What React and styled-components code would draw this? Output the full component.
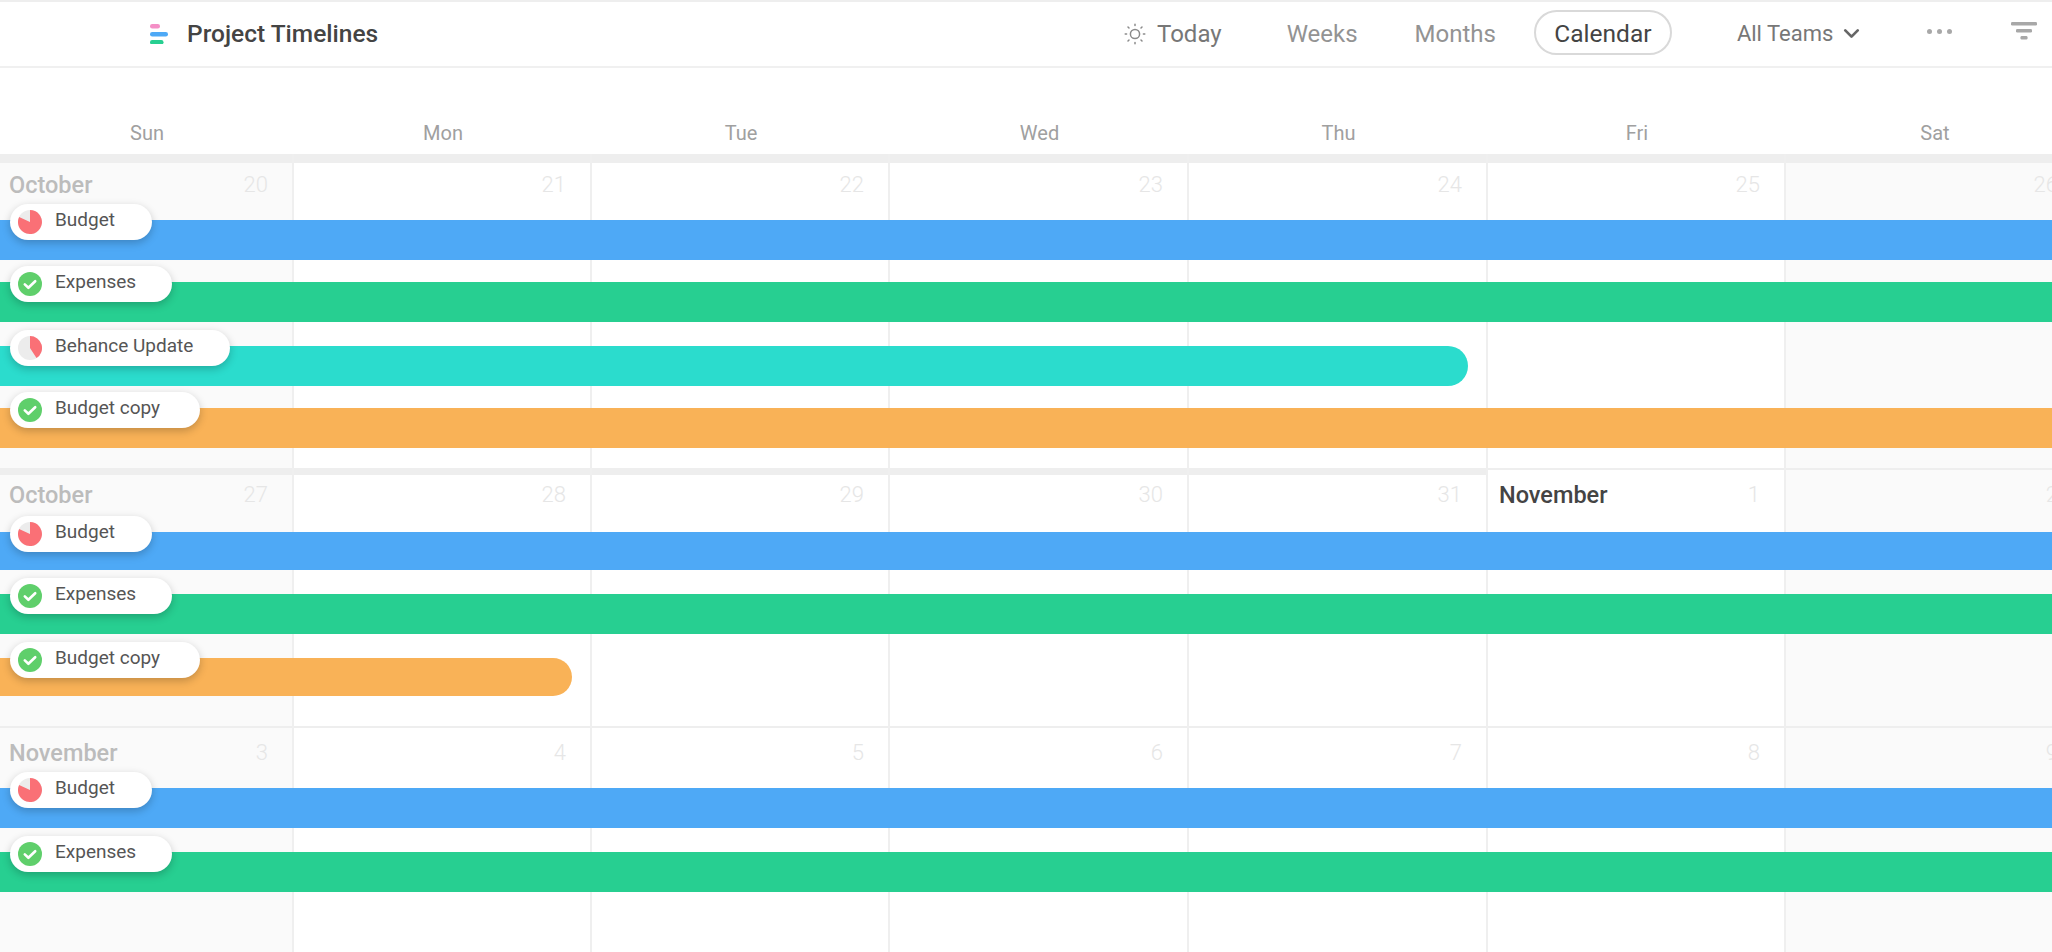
import React from 'react';
import styled, { createGlobalStyle } from 'styled-components';
import { ChevronDown } from 'lucide-react';

const DAYS = ['Sun', 'Mon', 'Tue', 'Wed', 'Thu', 'Fri', 'Sat'];
const COLUMNS = '294px 298px 298px 299px 299px 298px 298px';

const WEEKS = [
  {
    height: 314,
    pad: 19,
    barsTop: 66,
    cells: [
      { date: 20, month: 'October', band: 9 },
      { date: 21, band: 9 },
      { date: 22, band: 9 },
      { date: 23, band: 9 },
      { date: 24, band: 9 },
      { date: 25, band: 9 },
      { date: 26, band: 9 },
    ],
    bars: [
      { name: 'Budget', color: '#4ea9f6', status: 'most', gap: 0, h: 40, pill: 142 },
      { name: 'Expenses', color: '#27cf91', status: 'done', gap: 22, h: 40, pill: 162 },
      { name: 'Behance Update', color: '#2bdccd', status: 'some', gap: 24, h: 40, pill: 220, end: 1468 },
      { name: 'Budget copy', color: '#f9b257', status: 'done', gap: 22, h: 40, pill: 190 },
    ],
  },
  {
    height: 258,
    pad: 15,
    barsTop: 64,
    cells: [
      { date: 27, month: 'October', band: 7 },
      { date: 28, band: 7 },
      { date: 29, band: 7 },
      { date: 30, band: 7 },
      { date: 31, band: 7 },
      { date: 1, month: 'November', band: 2, current: true },
      { date: 2, band: 2 },
    ],
    bars: [
      { name: 'Budget', color: '#4ea9f6', status: 'most', gap: 0, h: 38, pill: 142 },
      { name: 'Expenses', color: '#27cf91', status: 'done', gap: 24, h: 40, pill: 162 },
      { name: 'Budget copy', color: '#f9b257', status: 'done', gap: 24, h: 38, pill: 190, end: 572 },
    ],
  },
  {
    height: 226,
    pad: 15,
    barsTop: 62,
    cells: [
      { date: 3, month: 'November', band: 2 },
      { date: 4, band: 2 },
      { date: 5, band: 2 },
      { date: 6, band: 2 },
      { date: 7, band: 2 },
      { date: 8, band: 2 },
      { date: 9, band: 2 },
    ],
    bars: [
      { name: 'Budget', color: '#4ea9f6', status: 'most', gap: 0, h: 40, pill: 142 },
      { name: 'Expenses', color: '#27cf91', status: 'done', gap: 24, h: 40, pill: 162 },
    ],
  },
];

function LogoIcon() {
  return (
    <svg width="18" height="20" viewBox="0 0 18 20">
      <rect x="0" y="0" width="10" height="4.5" rx="2.2" fill="#f48fc6" />
      <rect x="0" y="8" width="18" height="4.5" rx="2.2" fill="#4ea9f6" />
      <rect x="0" y="16" width="13.5" height="4.5" rx="2.2" fill="#27cf91" />
    </svg>
  );
}

function SunIcon() {
  return (
    <svg width="22" height="22" viewBox="0 0 22 22" fill="none" stroke="#8a8a8a" strokeWidth="1.5" strokeLinecap="round">
      <circle cx="11" cy="11" r="4.6" />
      <path d="M11 1.2v1.4M11 19.4v1.4M1.2 11h1.4M19.4 11h1.4M4 4l1 1M17 17l1 1M4 18l1-1M17 5l1-1" />
    </svg>
  );
}

function FilterIcon() {
  return (
    <svg width="26" height="18" viewBox="0 0 26 18">
      <rect x="0" y="0" width="26" height="3.4" rx="1.2" fill="#a8a8a8" />
      <rect x="5" y="7" width="16" height="3.4" rx="1.2" fill="#a8a8a8" />
      <rect x="9.5" y="14" width="7" height="3.4" rx="1.2" fill="#a8a8a8" />
    </svg>
  );
}

function StatusIcon({ status }) {
  if (status === 'done') {
    return (
      <svg width="24" height="24" viewBox="0 0 24 24">
        <circle cx="12" cy="12" r="12" fill="#5fcf6b" />
        <path d="M6.8 12.4l3.6 3.4 6.8-6.6" fill="none" stroke="#fff" strokeWidth="2.6" strokeLinecap="round" strokeLinejoin="round" />
      </svg>
    );
  }
  const slice =
    status === 'most'
      ? 'M12 12L12 0A12 12 0 1 1 1.1 6.9Z'
      : 'M12 12L12 0A12 12 0 0 1 18.5 22.1Z';
  return (
    <svg width="24" height="24" viewBox="0 0 24 24">
      <circle cx="12" cy="12" r="12" fill="#ececec" />
      <path d={slice} fill="#fa7076" />
    </svg>
  );
}

export default function App() {
  return (
    <Page>
      <GlobalStyle />
      <Header>
        <Brand>
          <LogoIcon />
          <Title>Project Timelines</Title>
        </Brand>
        <TodayLink>
          <SunIcon />
          Today
        </TodayLink>
        <NavLink $left={65}>Weeks</NavLink>
        <NavLink $left={57}>Months</NavLink>
        <CalendarPill>Calendar</CalendarPill>
        <TeamSelect>
          All Teams
          <ChevronDown size={25} strokeWidth={2.6} color="#666" />
        </TeamSelect>
        <MoreDots>
          <i />
          <i />
          <i />
        </MoreDots>
        <FilterButton>
          <FilterIcon />
        </FilterButton>
      </Header>

      <DayRow>
        {DAYS.map(day => (
          <DayName key={day}>{day}</DayName>
        ))}
      </DayRow>

      {WEEKS.map(week => (
        <Week key={week.cells[0].date} $height={week.height}>
          <Cells>
            {week.cells.map((cell, i) => (
              <Cell key={cell.date} $pad={week.pad} $band={cell.band} $weekend={i === 0 || i === 6}>
                <Month $current={cell.current}>{cell.month}</Month>
                <DateNum>{cell.date}</DateNum>
              </Cell>
            ))}
          </Cells>
          <Bars $top={week.barsTop}>
            {week.bars.map(bar => (
              <Bar key={bar.name} $color={bar.color} $gap={bar.gap} $h={bar.h} $end={bar.end}>
                <Pill $width={bar.pill}>
                  <StatusIcon status={bar.status} />
                  <PillName>{bar.name}</PillName>
                </Pill>
              </Bar>
            ))}
          </Bars>
        </Week>
      ))}
    </Page>
  );
}

const GlobalStyle = createGlobalStyle`
  html, body {
    margin: 0;
    background: #fff;
    overflow: hidden;
  }
  * {
    box-sizing: border-box;
  }
`;

const Page = styled.div`
  width: 2052px;
  height: 952px;
  overflow: hidden;
  font-family: Roboto, 'Liberation Sans', sans-serif;
  color: #444;
`;

const Header = styled.header`
  display: flex;
  align-items: center;
  height: 68px;
  padding-left: 150px;
  border-top: 2px solid #eeeeee;
  border-bottom: 2px solid #f0f0f0;
`;

const Brand = styled.div`
  display: flex;
  align-items: center;
  gap: 19px;
  width: 974px;
`;

const Title = styled.h1`
  margin: 0 0 2px;
  font-size: 24.5px;
  font-weight: 500;
  color: #444;
`;

const TodayLink = styled.div`
  display: flex;
  align-items: center;
  gap: 11px;
  font-size: 24px;
  color: #777;
`;

const NavLink = styled.div`
  margin-left: ${props => props.$left}px;
  font-size: 24px;
  color: #939393;
`;

const CalendarPill = styled.div`
  display: flex;
  align-items: center;
  justify-content: center;
  align-self: flex-start;
  width: 138px;
  height: 45px;
  margin: 8px 0 0 38px;
  padding-top: 2px;
  border: 2px solid #d9d9d9;
  border-radius: 23px;
  font-size: 24.5px;
  color: #444;
`;

const TeamSelect = styled.div`
  display: flex;
  align-items: center;
  gap: 6px;
  margin: 0 0 2px 65px;
  font-size: 22px;
  color: #777;
`;

const MoreDots = styled.div`
  display: flex;
  gap: 5px;
  margin: 0 0 6px 63px;

  i {
    width: 5px;
    height: 5px;
    border-radius: 50%;
    background: #a8a8a8;
  }
`;

const FilterButton = styled.div`
  display: flex;
  margin: 0 0 6px 59px;
`;

const DayRow = styled.div`
  display: grid;
  grid-template-columns: ${COLUMNS};
  height: 86px;
`;

const DayName = styled.div`
  padding-top: 53px;
  line-height: 24px;
  text-align: center;
  font-size: 20px;
  color: #a0a0a0;
`;

const Week = styled.section`
  display: grid;
  height: ${props => props.$height}px;
`;

const Cells = styled.div`
  grid-area: 1 / 1;
  display: grid;
  grid-template-columns: ${COLUMNS};
`;

const Cell = styled.div`
  display: flex;
  justify-content: space-between;
  align-items: flex-start;
  padding: ${props => props.$pad}px 24px 0 ${props => (props.$weekend ? 9 : 11)}px;
  border-right: 2px solid #efefef;
  box-shadow: inset 0 ${props => props.$band}px 0 #eeeeee;
  background: ${props => (props.$weekend ? '#fafafa' : '#fff')};
`;

const Month = styled.span`
  line-height: 24px;
  font-size: 23.5px;
  font-weight: 500;
  color: ${props => (props.$current ? '#444' : '#bcbcbc')};
`;

const DateNum = styled.span`
  line-height: 24px;
  font-size: 22px;
  font-weight: 300;
  color: #e6e6e6;
`;

const Bars = styled.div`
  grid-area: 1 / 1;
  display: flex;
  flex-direction: column;
  align-items: flex-start;
  padding-top: ${props => props.$top}px;
`;

const Bar = styled.div`
  position: relative;
  flex: none;
  width: ${props => (props.$end ? `${props.$end}px` : '100%')};
  height: ${props => props.$h}px;
  margin-top: ${props => props.$gap}px;
  background: ${props => props.$color};
  border-radius: ${props => (props.$end ? '0 20px 20px 0' : '0')};
`;

const Pill = styled.div`
  position: absolute;
  top: -16px;
  left: 10px;
  display: flex;
  align-items: center;
  gap: 13px;
  width: ${props => props.$width}px;
  height: 36px;
  padding-left: 8px;
  border-radius: 18px;
  background: #fff;
  box-shadow: 0 3px 8px rgba(0, 0, 0, 0.22);
`;

const PillName = styled.span`
  font-size: 19px;
  color: #555;
  transform: translateY(-3px);
`;
